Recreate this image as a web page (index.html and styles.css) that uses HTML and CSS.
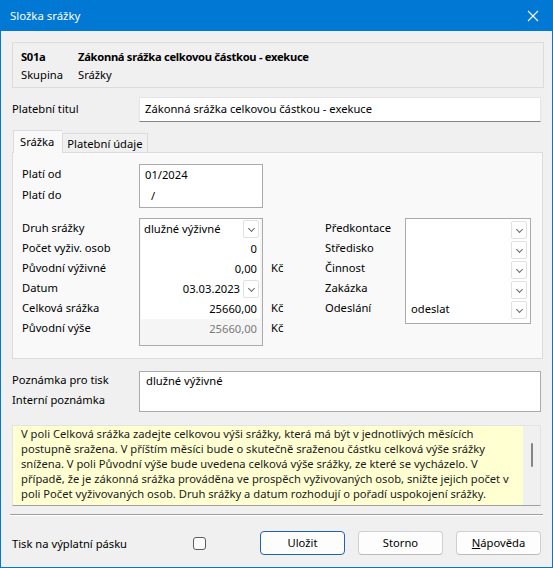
FILE: index.html
```html
<html>
<head>
<meta charset="UTF-8">
<title>Složka srážky</title>
<link rel="stylesheet" href="styles.css">
</head>
<body>
  <div class="window">
    <div class="titlebar">
      <span class="title">Složka srážky</span>
      <svg class="close" width="12" height="12" viewBox="0 0 12 12">
        <path d="M1 1 L11 11 M11 1 L1 11" stroke="#ffffff" stroke-width="1.1" fill="none"/>
      </svg>
    </div>

    <div class="content">
      <div class="header">
        <div class="hrow"><span class="hkey bold">S01a</span><span class="bold">Zákonná srážka celkovou částkou - exekuce</span></div>
        <div class="hrow"><span class="hkey">Skupina</span><span>Srážky</span></div>
      </div>

      <div class="titul">
        <div class="lbl">Platební titul</div>
        <div class="input">Zákonná srážka celkovou částkou - exekuce</div>
      </div>

      <div class="tabs">
        <div class="tab active">Srážka</div>
        <div class="tab">Platební údaje</div>
      </div>

      <div class="panel">
        <div class="section">
          <div class="labels">
            <div class="cell">Platí od</div>
            <div class="cell">Platí do</div>
          </div>
          <div class="box period">
            <div class="cell">01/2024</div>
            <div class="cell slash">/</div>
          </div>
        </div>

        <div class="section second">
          <div class="labels">
            <div class="cell">Druh srážky</div>
            <div class="cell">Počet vyživ. osob</div>
            <div class="cell">Původní výživné</div>
            <div class="cell">Datum</div>
            <div class="cell">Celková srážka</div>
            <div class="cell">Původní výše</div>
          </div>
          <div class="box values">
            <div class="cell combo"><span class="grow">dlužné výživné</span><span class="drop"></span></div>
            <div class="cell num">0</div>
            <div class="cell num">0,00</div>
            <div class="cell num combo"><span class="grow">03.03.2023</span><span class="drop"></span></div>
            <div class="cell num">25660,00</div>
            <div class="cell num disabled">25660,00</div>
          </div>
          <div class="units">
            <div class="cell"></div>
            <div class="cell"></div>
            <div class="cell">Kč</div>
            <div class="cell"></div>
            <div class="cell">Kč</div>
            <div class="cell">Kč</div>
          </div>
          <div class="labels rlabels">
            <div class="cell">Předkontace</div>
            <div class="cell">Středisko</div>
            <div class="cell">Činnost</div>
            <div class="cell">Zakázka</div>
            <div class="cell">Odeslání</div>
          </div>
          <div class="box selects">
            <div class="cell combo"><span class="grow"></span><span class="drop"></span></div>
            <div class="cell combo"><span class="grow"></span><span class="drop"></span></div>
            <div class="cell combo"><span class="grow"></span><span class="drop"></span></div>
            <div class="cell combo"><span class="grow"></span><span class="drop"></span></div>
            <div class="cell combo"><span class="grow">odeslat</span><span class="drop"></span></div>
          </div>
        </div>
      </div>

      <div class="notes">
        <div class="labels nlabels">
          <div class="cell">Poznámka pro tisk</div>
          <div class="cell">Interní poznámka</div>
        </div>
        <div class="notebox">dlužné výživné</div>
      </div>

      <div class="help">
        <div class="helptext">
          V poli Celková srážka zadejte celkovou výši srážky, která má být v jednotlivých měsících<br>
          postupně sražena. V příštím měsíci bude o skutečně sraženou částku celková výše srážky<br>
          snížena. V poli Původní výše bude uvedena celková výše srážky, ze které se vycházelo. V<br>
          případě, že je zákonná srážka prováděna ve prospěch vyživovaných osob, snižte jejich počet v<br>
          poli Počet vyživovaných osob. Druh srážky a datum rozhodují o pořadí uspokojení srážky.
        </div>
        <div class="scroll"><div class="thumb"></div></div>
      </div>

      <div class="separator"></div>

      <div class="footer">
        <div class="printlbl">Tisk na výplatní pásku</div>
        <div class="check"></div>
        <div class="buttons">
          <div class="btn default">Uložit</div>
          <div class="btn">Storno</div>
          <div class="btn"><u>N</u>ápověda</div>
        </div>
      </div>
    </div>
  </div>
</body>
</html>
```

FILE: styles.css
```css
* {
  box-sizing: border-box;
}

body {
  margin: 0;
  font-family: "Noto Sans", "Open Sans", sans-serif;
  font-size: 11.2px;
  color: #000000;
  background: #f0f0f0;
}

.window {
  width: 553px;
  height: 568px;
  border: 1px solid #0078d4;
  border-top: 0;
  background: #f0f0f0;
}

/* title bar */
.titlebar {
  height: 31px;
  background: #0078d4;
  color: #ffffff;
  display: flex;
  align-items: center;
  justify-content: space-between;
  padding: 0 10px 0 9px;
  font-size: 11.4px;
}
.close {
  margin-right: 3px;
}

.content {
  padding: 11px 8px 0 11px;
}

.bold {
  font-weight: bold;
  letter-spacing: -0.3px;
}

/* header group */
.header {
  height: 46px;
  border: 1px solid #dcdcdc;
  padding: 5px 8px 0 8px;
}
.hrow {
  display: flex;
  height: 18px;
  line-height: 18px;
}
.hkey {
  width: 57px;
}

/* platebni titul */
.titul {
  display: flex;
  align-items: center;
  margin-top: 9px;
  margin-right: 3px;
}
.lbl {
  width: 127px;
  margin-top: -3px;
}
.input {
  flex: 1;
  height: 25px;
  line-height: 22px;
  background: #ffffff;
  border: 1px solid #e5e5e5;
  border-bottom-color: #868686;
  padding-left: 5px;
}

/* tabs */
.tabs {
  display: flex;
  margin-top: 8px;
  height: 22px;
  padding-left: 1px;
}
.tab {
  height: 19px;
  margin-top: 3px;
  border: 1px solid #dcdcdc;
  border-bottom: 0;
  background: #f0f0f0;
  padding: 0 5px 0 4px;
  line-height: 19px;
}
.tab.active {
  height: 23px;
  margin-top: 0;
  background: #f9f9f9;
  padding: 0 8px 0 6px;
  line-height: 21px;
  position: relative;
  z-index: 1;
  border-right: 0;
}

.panel {
  margin-right: 1px;
  border: 1px solid #dcdcdc;
  background: #f9f9f9;
  padding: 11px 0 12px 9px;
}

.section {
  display: flex;
}
.section.second {
  margin-top: 10px;
}

.labels {
  width: 117px;
  padding-top: 0;
}
.cell {
  height: 20px;
  line-height: 20px;
  white-space: nowrap;
}
.period .cell {
  height: 21px;
  line-height: 19px;
}
.section:first-child .labels .cell {
  height: 21px;
  line-height: 19px;
}

.box {
  width: 124px;
  border: 1px solid #ababab;
  background: #ffffff;
}
.period {
  height: 44px;
  padding: 0 0 0 5px;
}
.slash {
  padding-left: 6px;
}

.values {
  height: 128px;
  background: #f5f5f5;
  padding: 0 2px 0 1px;
}
.values .cell {
  background: #ffffff;
  padding: 0 3px 0 3px;
}
.values .num {
  text-align: right;
}
.values .disabled {
  height: 26px;
  line-height: 20px;
  background: #f5f5f5;
  color: #7a7a7a;
}

.combo {
  display: flex;
  align-items: center;
}
.combo .grow {
  flex: 1;
}
.values .combo {
  padding-right: 1px;
}
.drop {
  width: 16px;
  height: 18px;
  border: 1px solid #e1e1e1;
  border-radius: 2px;
  background: #ffffff;
  margin-left: 3px;
  position: relative;
}
.drop:after {
  content: "";
  position: absolute;
  left: 5px;
  top: 5px;
  width: 4px;
  height: 4px;
  border-right: 1px solid #6a6a6a;
  border-bottom: 1px solid #6a6a6a;
  transform: rotate(45deg);
}

.units {
  width: 62px;
  padding: 0 0 0 8px;
}

.rlabels {
  width: 80px;
}
.selects {
  width: 126px;
  height: 106px;
  padding: 0 3px 0 5px;
}
.selects .drop {
  margin-top: 1px;
}

/* notes */
.notes {
  display: flex;
  margin-top: 12px;
  margin-right: 3px;
}
.nlabels {
  width: 127px;
  padding-top: 0;
}
.nlabels .cell {
  line-height: 18px;
}
.notebox {
  flex: 1;
  height: 41px;
  border: 1px solid #ababab;
  background: #ffffff;
  padding: 0 6px;
  line-height: 17px;
}

/* help */
.help {
  display: flex;
  margin-top: 13px;
  margin-right: 3px;
  height: 81px;
  border: 1px solid #e3e3e3;
  border-bottom-color: #a0a0a0;
  background: #ffffd2;
}
.helptext {
  flex: 1;
  padding: 0 0 0 8px;
  line-height: 15px;
  white-space: nowrap;
  color: #1a1a1a;
}
.scroll {
  width: 17px;
  background: #f0f0f0;
  position: relative;
}
.thumb {
  position: absolute;
  left: 8px;
  top: 17px;
  width: 2px;
  height: 24px;
  border-radius: 1px;
  background: #858585;
}

.separator {
  margin: 8px 1px 0 -2px;
  border-top: 1px solid #a0a0a0;
  border-bottom: 1px solid #ffffff;
}

/* footer */
.footer {
  display: flex;
  align-items: center;
  margin-top: 15px;
  height: 24px;
}
.printlbl {
  width: 181px;
}
.check {
  width: 13px;
  height: 13px;
  border: 1px solid #5c5c5c;
  border-radius: 3px;
  background: #fbfbfb;
  margin-top: 1px;
}
.buttons {
  display: flex;
  margin-left: 54px;
}
.btn {
  width: 85px;
  height: 24px;
  line-height: 22px;
  text-align: center;
  border: 1px solid #d0d0d0;
  border-bottom-color: #bcbcbc;
  border-radius: 4px;
  background: #fdfdfd;
  margin-right: 13px;
}
.btn:last-child {
  margin-right: 0;
}
.btn.default {
  border: 1px solid #1d64ad;
}
```
